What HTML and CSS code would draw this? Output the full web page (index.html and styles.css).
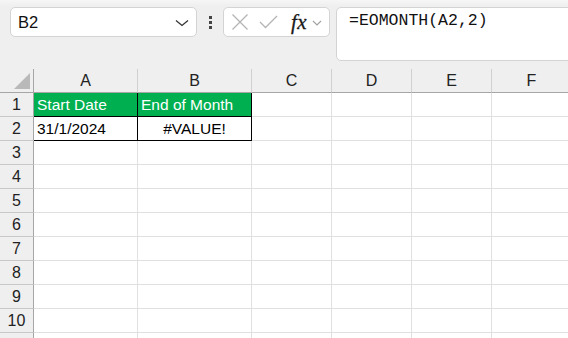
FILE: index.html
```html
<!DOCTYPE html>
<html>
<head>
<meta charset="utf-8">
<link rel="stylesheet" href="styles.css">
</head>
<body>
<div class="topbar">
  <div class="namebox">
    <span class="name">B2</span>
    <svg class="chev" width="14" height="8" viewBox="0 0 14 8"><path d="M1 1.5 L7 6.5 L13 1.5" fill="none" stroke="#333" stroke-width="1.3"/></svg>
  </div>
  <div class="dots"><i></i><i></i><i></i></div>
  <div class="iconbox">
    <svg class="ic" width="18" height="18" viewBox="0 0 18 18"><path d="M1.5 1.5 L16.5 16.5 M16.5 1.5 L1.5 16.5" stroke="#b4b4b4" stroke-width="1.3" fill="none"/></svg>
    <svg class="ic ok" width="19" height="14" viewBox="0 0 19 14"><path d="M1 7 L6.5 12.5 L18 1" stroke="#b4b4b4" stroke-width="1.3" fill="none"/></svg>
    <span class="fx">fx</span>
    <svg class="chev2" width="10" height="6" viewBox="0 0 10 6"><path d="M1 1 L5 5 L9 1" fill="none" stroke="#a0a0a0" stroke-width="1.1"/></svg>
  </div>
  <div class="formula">=EOMONTH(A2,2)</div>
</div>
<div class="sheet">
<div class="grid">
  <div class="corner"><svg width="16" height="16" viewBox="0 0 16 16"><path d="M16 0 L16 16 L0 16 Z" fill="#b9b9b9"/></svg></div>
  <div class="ch">A</div><div class="ch">B</div><div class="ch">C</div><div class="ch">D</div><div class="ch">E</div><div class="ch">F</div>

  <div class="rh">1</div>
  <div class="c hd bl">Start Date</div><div class="c hd bl">End of Month</div><div class="c"></div><div class="c"></div><div class="c"></div><div class="c"></div>

  <div class="rh">2</div>
  <div class="c bl">31/1/2024</div><div class="c bl ctr">#VALUE!</div><div class="c"></div><div class="c"></div><div class="c"></div><div class="c"></div>

  <div class="rh">3</div><div class="c"></div><div class="c"></div><div class="c"></div><div class="c"></div><div class="c"></div><div class="c"></div>
  <div class="rh">4</div><div class="c"></div><div class="c"></div><div class="c"></div><div class="c"></div><div class="c"></div><div class="c"></div>
  <div class="rh">5</div><div class="c"></div><div class="c"></div><div class="c"></div><div class="c"></div><div class="c"></div><div class="c"></div>
  <div class="rh">6</div><div class="c"></div><div class="c"></div><div class="c"></div><div class="c"></div><div class="c"></div><div class="c"></div>
  <div class="rh">7</div><div class="c"></div><div class="c"></div><div class="c"></div><div class="c"></div><div class="c"></div><div class="c"></div>
  <div class="rh">8</div><div class="c"></div><div class="c"></div><div class="c"></div><div class="c"></div><div class="c"></div><div class="c"></div>
  <div class="rh">9</div><div class="c"></div><div class="c"></div><div class="c"></div><div class="c"></div><div class="c"></div><div class="c"></div>
  <div class="rh">10</div><div class="c"></div><div class="c"></div><div class="c"></div><div class="c"></div><div class="c"></div><div class="c"></div>
  <div class="rh"></div><div class="c"></div><div class="c"></div><div class="c"></div><div class="c"></div><div class="c"></div><div class="c"></div>
</div>
</div>
</body>
</html>
```
FILE: styles.css
```css
* { box-sizing: border-box; }
html, body { margin: 0; padding: 0; }
body {
  width: 568px;
  height: 338px;
  overflow: hidden;
  background: linear-gradient(#f6f6f6 0px, #efefef 6px);
  font-family: "Liberation Sans", Arial, sans-serif;
  color: #000;
}
.topbar {
  display: flex;
  align-items: flex-start;
  padding: 7px 0 0 10px;
  width: 580px;
}
.namebox {
  width: 187px;
  height: 30px;
  background: #fff;
  border: 1px solid #d4d4d4;
  border-radius: 5px;
  display: flex;
  align-items: center;
  justify-content: space-between;
  padding: 0 7px 0 7px;
}
.name { font-size: 16.5px; color: #111; }
.chev { margin-top: 1px; }
.dots {
  width: 26px;
  height: 30px;
  display: flex;
  flex-direction: column;
  align-items: center;
  justify-content: center;
  gap: 2px;
}
.dots i {
  display: block;
  width: 3px;
  height: 3px;
  background: #444;
}
.iconbox {
  width: 107px;
  height: 30px;
  background: #fff;
  border: 1px solid #d4d4d4;
  border-radius: 5px;
  display: flex;
  align-items: center;
  padding-left: 7px;
}
.ok { margin-left: 10px; }
.fx {
  font-family: "Liberation Serif", "Times New Roman", serif;
  font-style: italic;
  font-size: 21px;
  color: #1a1a1a;
  margin-left: 13px;
  letter-spacing: 0.5px;
  -webkit-text-stroke: 0.3px #1a1a1a;
}
.chev2 { margin-left: 5px; margin-top: 2px; }
.formula {
  flex: 1;
  height: 54px;
  margin-left: 6px;
  background: #fff;
  border: 1px solid #d4d4d4;
  border-radius: 5px;
  padding: 3px 0 0 12px;
  font-family: "Liberation Mono", "Courier New", monospace;
  font-size: 16.5px;
  color: #111;
}
.sheet {
  margin-top: 8px;
  height: 269px;
  overflow: hidden;
}
.grid {
  display: grid;
  grid-template-columns: 34px 104px 114px 80px 80px 80px 80px;
  grid-auto-rows: 24px;
  width: 572px;
}
.corner {
  background: #efefef;
  border-right: 1px solid #a6a6a6;
  border-bottom: 1px solid #a6a6a6;
  display: flex;
  align-items: flex-end;
  justify-content: flex-end;
  padding: 0 3px 3px 0;
}
.ch {
  background: #efefef;
  border-right: 1px solid #d0d0d0;
  border-bottom: 1px solid #a6a6a6;
  display: flex;
  align-items: center;
  justify-content: center;
  font-size: 16px;
  color: #222;
}
.rh {
  background: #efefef;
  border-right: 1px solid #a6a6a6;
  border-bottom: 1px solid #c8c8c8;
  display: flex;
  align-items: center;
  justify-content: center;
  font-size: 16px;
  color: #222;
}
.c {
  background: #fff;
  border-right: 1px solid #e0e0e0;
  border-bottom: 1px solid #e0e0e0;
  display: flex;
  align-items: center;
  padding-left: 3px;
  font-size: 15.5px;
  white-space: nowrap;
}
.c.bl {
  border-right-color: #000;
  border-bottom-color: #000;
}
.c.hd {
  background: #00b050;
  color: #fff;
}
.c.ctr {
  justify-content: center;
  padding-left: 0;
}
```
